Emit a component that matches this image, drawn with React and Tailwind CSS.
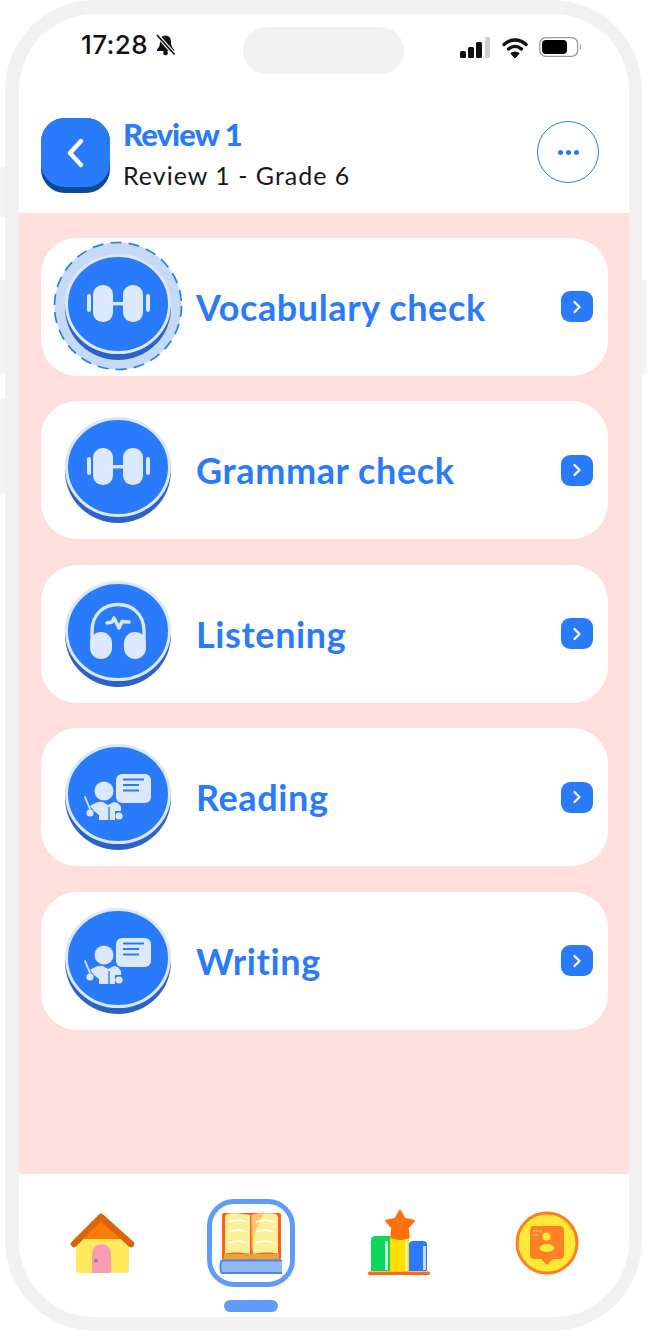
import React from "react";

const BLUE = "#2a7bfb";
const PALE = "#dbe8fd";

function Badge({ children }) {
  return (
    <svg width="106" height="106" viewBox="0 0 106 106" className="block">
      <ellipse cx="53" cy="54" rx="53" ry="52" fill="#2b62c9" />
      <ellipse cx="53" cy="50" rx="51.5" ry="48.5" fill={BLUE} stroke={PALE} strokeWidth="3" />
      {children}
    </svg>
  );
}

function Dumbbell() {
  return (
    <g fill={PALE}>
      <rect x="22" y="40" width="4" height="18" rx="2" />
      <rect x="81" y="40" width="4" height="18" rx="2" />
      <rect x="28" y="31" width="20" height="37" rx="9.5" />
      <rect x="58" y="31" width="20" height="37" rx="9.5" />
      <rect x="47" y="48" width="12" height="3.4" />
    </g>
  );
}

function Headphones() {
  return (
    <g>
      <path d="M27 60 V50 C27 33 39 23.5 53 23.5 C67 23.5 79 33 79 50 V60" fill="none" stroke={PALE} strokeWidth="3.4" />
      <rect x="25" y="51" width="22" height="27" rx="11" fill={PALE} />
      <rect x="59" y="51" width="22" height="27" rx="11" fill={PALE} />
      <path d="M42 42 L47 41 L49 37 L54 47 L57 40.5 L64 41" fill="none" stroke={PALE} strokeWidth="3.4" strokeLinecap="round" strokeLinejoin="round" />
    </g>
  );
}

function Reader() {
  return (
    <g fill={PALE}>
      <rect x="51" y="30" width="35" height="29" rx="6" />
      <path d="M58 35.5 H79 M58 41 H74 M58 46.5 H74" stroke={BLUE} strokeWidth="1.9" />
      <circle cx="39" cy="47" r="9.5" />
      <path d="M25 62 C30 58 36 57 38 58 L43 61 L49 58 L53 59 L56 63 V67 H50 V76 H34 V71 L29 67 Z" />
      <path d="M44 63 V77" stroke={BLUE} strokeWidth="1.4" />
      <path d="M20 53 L25 65" stroke={PALE} strokeWidth="1.8" strokeLinecap="round" />
      <circle cx="25" cy="69" r="3.6" />
      <circle cx="54" cy="72" r="3.6" />
    </g>
  );
}

function LessonCard({ title, active, icon }) {
  return (
    <div className="flex h-[138px] items-center rounded-[36px] bg-white pl-[24px] pr-[15px]">
      <div className="relative h-[106px] w-[106px] shrink-0">
        {active && (
          <svg width="130" height="130" viewBox="0 0 130 130" className="absolute left-[-12px] top-[-13px]">
            <circle cx="65" cy="65" r="63.5" fill="#c5daf9" stroke={BLUE} strokeWidth="1.7" strokeDasharray="11 7.2" />
          </svg>
        )}
        <div className="relative">
          <Badge>{icon}</Badge>
        </div>
      </div>
      <span className="ml-[25px] flex-1 text-[36px] font-bold leading-none tracking-[0.6px] text-[#2a7bfb] [font-family:Lato,sans-serif]">
        {title}
      </span>
      <span className="flex h-[31px] w-[32px] items-center justify-center rounded-[9px] bg-[#2a7bfb]">
        <svg width="12" height="14" viewBox="0 0 12 14" fill="none">
          <path d="M3.5 2 L8.5 7 L3.5 12" stroke="#fff" strokeWidth="2.2" strokeLinecap="round" strokeLinejoin="round" />
        </svg>
      </span>
    </div>
  );
}

function BellOff() {
  return (
    <svg width="21" height="22" viewBox="0 0 21 22">
      <path d="M10.5 1.5 C6.5 1.5 5 4.5 5 8 C5 12 3.5 14 2 15.5 V17 H19 V15.5 C17.5 14 16 12 16 8 C16 4.5 14.5 1.5 10.5 1.5 Z" fill="#111" />
      <circle cx="10.5" cy="19" r="2.4" fill="#111" />
      <path d="M2 1 L19.5 20.5" stroke="#fff" strokeWidth="4" />
      <path d="M2 1 L19.5 20.5" stroke="#111" strokeWidth="1.7" />
    </svg>
  );
}

function StatusIcons() {
  return (
    <div className="flex items-center pl-[56px] pt-[22px]">
      <svg width="31" height="24" viewBox="0 0 31 24">
        <rect x="0" y="15" width="6" height="7" rx="1.5" fill="#111" />
        <rect x="8" y="11" width="6" height="11" rx="1.5" fill="#111" />
        <rect x="16" y="6" width="6" height="16" rx="1.5" fill="#111" />
        <rect x="25" y="1" width="5" height="21" rx="1" fill="#cfcfcf" />
      </svg>
      <svg width="26" height="22" viewBox="0 0 26 22" className="ml-[11px]">
        <path d="M2 7.5 C8.5 1.5 17.5 1.5 24 7.5" fill="none" stroke="#111" strokeWidth="3.4" strokeLinecap="round" />
        <path d="M6.5 12 C10.5 8.5 15.5 8.5 19.5 12" fill="none" stroke="#111" strokeWidth="3.4" strokeLinecap="round" />
        <path d="M13 21 L8.8 16.4 C11 14.6 15 14.6 17.2 16.4 Z" fill="#111" stroke="#111" strokeLinejoin="round" />
      </svg>
      <svg width="44" height="22" viewBox="0 0 44 22" className="ml-[11px] mt-[-2px]">
        <rect x="0.7" y="1.7" width="38" height="18.6" rx="6" fill="#fff" stroke="#9a9a9a" strokeWidth="1.3" />
        <rect x="3" y="4" width="25" height="14" rx="4" fill="#000" />
        <path d="M41 8 C42.5 9 42.5 13 41 14 Z" fill="#9a9a9a" />
      </svg>
    </div>
  );
}

function HomeIcon() {
  return (
    <svg width="70" height="64" viewBox="68 1212 70 64" className="block">
      <rect x="76" y="1238" width="53" height="36" rx="2" fill="#ffea5c" />
      <path d="M101 1220 L121 1240 H81 Z" fill="#ff7a00" />
      <path d="M74 1245 L101 1218 L131 1245" fill="none" stroke="#d9650a" strokeWidth="6.5" strokeLinecap="round" strokeLinejoin="round" />
      <path d="M92 1274 V1255 C92 1242 111 1242 111 1255 V1274 Z" fill="#fb9cb4" />
      <circle cx="96" cy="1261.5" r="2" fill="#a97f9a" />
    </svg>
  );
}

function BookIcon() {
  return (
    <svg width="65" height="63" viewBox="218 1212 65 63" className="block">
      <rect x="221" y="1213" width="59" height="47" rx="2" fill="#ff5f17" />
      <rect x="223" y="1254" width="55" height="5.5" fill="#e8a33e" />
      <path d="M224 1217 C224 1213 232 1212 249 1215 V1254 C238 1252 230 1252 224 1254 Z" fill="#fbf09a" />
      <path d="M277 1217 C277 1213 269 1212 252 1215 V1254 C263 1252 271 1252 277 1254 Z" fill="#fbf09a" />
      <path d="M250 1215 L263 1212 L254 1232 L251 1254 Z" fill="#fbc66a" />
      <path d="M227 1222 C233 1220 241 1220 246 1222 M227 1232 C233 1230 241 1230 246 1232 M227 1243 C233 1241 241 1241 246 1243 M255 1222 C260 1220 268 1220 274 1222 M255 1232 C260 1230 268 1230 274 1232 M255 1243 C260 1241 268 1241 274 1243" fill="none" stroke="#fff" strokeWidth="1.7" />
      <path d="M250 1263 L246.5 1259 H253.5 Z" fill="#ff5f17" />
      <path d="M281 1260.5 H221 C219 1260.5 219 1273 221 1273 H281" fill="#94b8f5" stroke="#4a85ee" strokeWidth="2" />
    </svg>
  );
}

function ChartIcon() {
  return (
    <svg width="64" height="68" viewBox="367 1208 64 68" className="block">
      <path d="M371 1270 V1239 C371 1236 373 1235 376 1235 H390 V1270 Z" fill="#0bd85a" />
      <rect x="390" y="1235" width="19" height="35" fill="#ffdf00" />
      <path d="M409 1270 V1243 C409 1241 411 1240 413 1240 H423 C425 1240 427 1241 427 1243 V1270 Z" fill="#2a7bfb" />
      <rect x="385" y="1240" width="3" height="29" fill="#c9f2d6" />
      <rect x="423" y="1245" width="3" height="24" fill="#c5d9fb" />
      <rect x="405" y="1238" width="2.5" height="32" fill="#fff2a0" />
      <rect x="368" y="1270.5" width="62" height="3.5" rx="1.7" fill="#ff6a13" />
      <path d="M400 1210 L404.5 1218 L413.5 1220 L407.5 1227 L408.5 1236 L400 1238 L391.5 1236 L392.5 1227 L386.5 1220 L395.5 1218 Z" fill="#ff7009" stroke="#ff7009" strokeWidth="2.5" strokeLinejoin="round" />
    </svg>
  );
}

function ProfileIcon() {
  return (
    <svg width="64" height="64" viewBox="515 1211 64 64" className="block">
      <circle cx="547" cy="1243" r="30" fill="#ffe838" stroke="#ff7f20" strokeWidth="3" />
      <path d="M534 1226 H560 C562.5 1226 564 1227.5 564 1230 V1255 C564 1257.5 562.5 1259 560 1259 H553 L547 1265 L541 1259 H534 C531.5 1259 530 1257.5 530 1255 V1230 C530 1227.5 531.5 1226 534 1226 Z" fill="#ff8126" />
      <circle cx="546.5" cy="1236.5" r="4" fill="#ffe838" />
      <ellipse cx="547" cy="1248" rx="7.5" ry="4" fill="#ffe838" />
      <path d="M533.5 1231 H542 M533.5 1235 H538" stroke="#ffd9a0" strokeWidth="1" strokeDasharray="1.5 0.7" />
    </svg>
  );
}

const lessons = [
  { title: "Vocabulary check", icon: <Dumbbell />, active: true },
  { title: "Grammar check", icon: <Dumbbell /> },
  { title: "Listening", icon: <Headphones /> },
  { title: "Reading", icon: <Reader /> },
  { title: "Writing", icon: <Reader /> },
];

export default function App() {
  return (
    <div className="relative h-[1332px] w-[647px] overflow-hidden bg-white">
      {/* hardware buttons */}
      <div className="absolute left-0 top-[167px] h-[50px] w-[5px] rounded-l-[2px] bg-[#f3f3f3]" />
      <div className="absolute left-0 top-[280px] h-[93px] w-[5px] rounded-l-[2px] bg-[#f3f3f3]" />
      <div className="absolute left-0 top-[398px] h-[95px] w-[5px] rounded-l-[2px] bg-[#f3f3f3]" />
      <div className="absolute right-0 top-[280px] h-[94px] w-[5px] rounded-r-[2px] bg-[#f3f3f3]" />

      <div className="ml-[5px] h-[1331px] w-[637px] rounded-[90px] bg-[#f1f1f1] pb-[14px] pl-[14px] pr-[13px] pt-[14px]">
        <div className="flex h-full flex-col overflow-hidden rounded-[76px] bg-white">
          {/* status bar */}
          <div className="flex h-[104px] shrink-0 items-start">
            <div className="flex w-[224px] items-center pl-[62px] pt-[17px]">
              <span className="text-[26px] font-medium leading-[28px] tracking-[0.4px] text-[#111] [font-family:Inter,sans-serif]">17:28</span>
              <span className="ml-[7px]">
                <BellOff />
              </span>
            </div>
            <div className="mt-[13px] h-[47px] w-[161px] rounded-[24px] bg-[#f1f1f1]" />
            <StatusIcons />
          </div>

          {/* header */}
          <div className="flex h-[95px] shrink-0 items-start pl-[22px] pr-[30px]">
            <div className="h-[75px] w-[69px] rounded-[24px] bg-[#0b4a94]">
              <div className="flex h-[69px] w-[69px] items-center justify-center rounded-[24px] bg-[#2a7bfb]">
                <svg width="20" height="30" viewBox="0 0 20 30" fill="none">
                  <path d="M15 3 L4 15 L15 27" stroke="#fff" strokeWidth="4.4" strokeLinecap="round" strokeLinejoin="round" />
                </svg>
              </div>
            </div>
            <div className="ml-[13px] mt-[-1px] flex-1 [font-family:Lato,sans-serif]">
              <div className="text-[31px] font-black leading-[34px] tracking-[-0.9px] text-[#2a7bfb]">Review 1</div>
              <div className="mt-[7px] text-[25px] leading-[34px] tracking-[1px] text-[#16181d]">Review 1 - Grade 6</div>
            </div>
            <div className="mt-[3px] flex h-[62px] w-[62px] items-center justify-center gap-[3px] rounded-full border-[1.5px] border-[#2a7bfb]">
              <span className="h-[5px] w-[5px] rounded-full bg-[#2a7bfb]" />
              <span className="h-[5px] w-[5px] rounded-full bg-[#2a7bfb]" />
              <span className="h-[5px] w-[5px] rounded-full bg-[#2a7bfb]" />
            </div>
          </div>

          {/* lesson list */}
          <div className="flex flex-1 flex-col gap-[25.5px] bg-[#ffdfdc] pl-[22px] pr-[21px] pt-[24.75px]">
            {lessons.map((lesson) => (
              <LessonCard key={lesson.title} {...lesson} />
            ))}
          </div>

          {/* bottom navigation */}
          <div className="grid h-[143px] shrink-0 grid-cols-[repeat(4,148px)] bg-white pl-[10px] pt-[25px]">
            <div className="flex h-[88px] items-center justify-center">
              <HomeIcon />
            </div>
            <div className="flex flex-col items-center">
              <div className="flex h-[88px] w-[88px] items-center justify-center rounded-[27px] border-[5px] border-[#5e9bfb]">
                <BookIcon />
              </div>
              <div className="mt-[13px] h-[12px] w-[54px] rounded-full bg-[#5e9bfb]" />
            </div>
            <div className="flex h-[88px] items-center justify-center">
              <ChartIcon />
            </div>
            <div className="flex h-[88px] items-center justify-center">
              <ProfileIcon />
            </div>
          </div>
        </div>
      </div>
    </div>
  );
}
